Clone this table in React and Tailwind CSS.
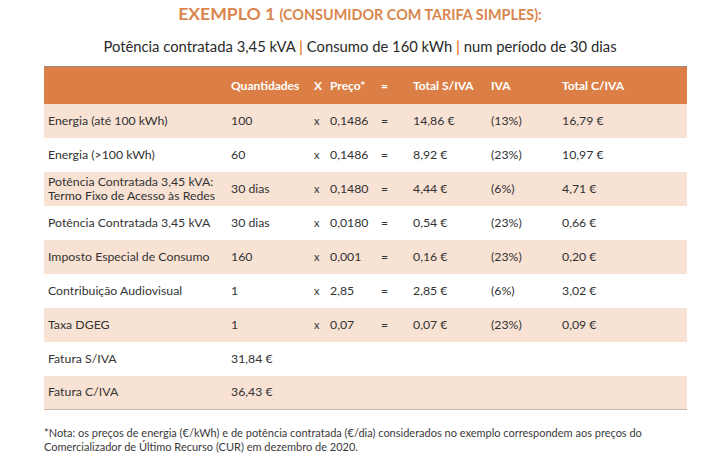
import React from "react";

const rows = [
  { label: "Energia (até 100 kWh)", q: "100", p: "0,1486", t: "14,86 €", iva: "(13%)", tc: "16,79 €" },
  { label: "Energia (>100 kWh)", q: "60", p: "0,1486", t: "8,92 €", iva: "(23%)", tc: "10,97 €" },
  { label: ["Potência Contratada 3,45 kVA:", "Termo Fixo de Acesso às Redes"], q: "30 dias", p: "0,1480", t: "4,44 €", iva: "(6%)", tc: "4,71 €" },
  { label: "Potência Contratada 3,45 kVA", q: "30 dias", p: "0,0180", t: "0,54 €", iva: "(23%)", tc: "0,66 €" },
  { label: "Imposto Especial de Consumo", q: "160", p: "0,001", t: "0,16 €", iva: "(23%)", tc: "0,20 €" },
  { label: "Contribuição Audiovisual", q: "1", p: "2,85", t: "2,85 €", iva: "(6%)", tc: "3,02 €" },
  { label: "Taxa DGEG", q: "1", p: "0,07", t: "0,07 €", iva: "(23%)", tc: "0,09 €" },
];

const grid = "grid grid-cols-[183px_83px_16px_51px_32px_78px_71px_1fr] items-center pl-[4px]";

export default function App() {
  return (
    <div className="w-[720px] h-[471px] bg-white text-[#333333] overflow-hidden" style={{ fontFamily: "Lato, 'Noto Sans', sans-serif" }}>
      <div className="pt-[3px] text-center font-bold text-[#d9864e] leading-[22px]">
        <span className="text-[17.6px]">EXEMPLO 1 </span>
        <span className="text-[14.4px]">(CONSUMIDOR COM TARIFA SIMPLES):</span>
      </div>
      <div className="mt-[10px] text-center text-[14.8px] leading-[20px] text-[#2a2a2a]">
        Potência contratada 3,45 kVA <span className="text-[#e5833a] font-bold">|</span> Consumo de 160 kWh{" "}
        <span className="text-[#e5833a] font-bold">|</span> num período de 30 dias
      </div>
      <div className="mx-[44px] w-[643px] mt-[10px] border-t border-[#9a8a80] border-b border-b-[#c9b8ac] text-[12.3px]">
        <div className={`${grid} h-[37px] bg-[#dc7f46] text-white font-bold text-[12px]`}>
          <div></div>
          <div>Quantidades</div>
          <div>X</div>
          <div>Preço*</div>
          <div>=</div>
          <div>Total S/IVA</div>
          <div>IVA</div>
          <div>Total C/IVA</div>
        </div>
        {rows.map((r, i) => (
          <div key={i} className={`${grid} h-[34px] ${i % 2 === 0 ? "bg-[#f8e2d3]" : "bg-white"}`}>
            <div className="leading-[14px] whitespace-nowrap">
              {Array.isArray(r.label) ? (
                <>
                  <div>{r.label[0]}</div>
                  <div>{r.label[1]}</div>
                </>
              ) : (
                r.label
              )}
            </div>
            <div>{r.q}</div>
            <div className="text-[11px]">x</div>
            <div>{r.p}</div>
            <div>=</div>
            <div>{r.t}</div>
            <div>{r.iva}</div>
            <div>{r.tc}</div>
          </div>
        ))}
        <div className={`${grid} h-[34px] bg-white`}>
          <div>Fatura S/IVA</div>
          <div>31,84 €</div>
        </div>
        <div className={`${grid} h-[33px] bg-[#f8e2d3]`}>
          <div>Fatura C/IVA</div>
          <div>36,43 €</div>
        </div>
      </div>
      <div className="mx-[44px] mt-[16px] text-[11px] leading-[14px] text-[#3a3a3a] whitespace-nowrap">
        <div>*Nota: os preços de energia (€/kWh) e de potência contratada (€/dia) considerados no exemplo correspondem aos preços do</div>
        <div>Comercializador de Último Recurso (CUR) em dezembro de 2020.</div>
      </div>
    </div>
  );
}
